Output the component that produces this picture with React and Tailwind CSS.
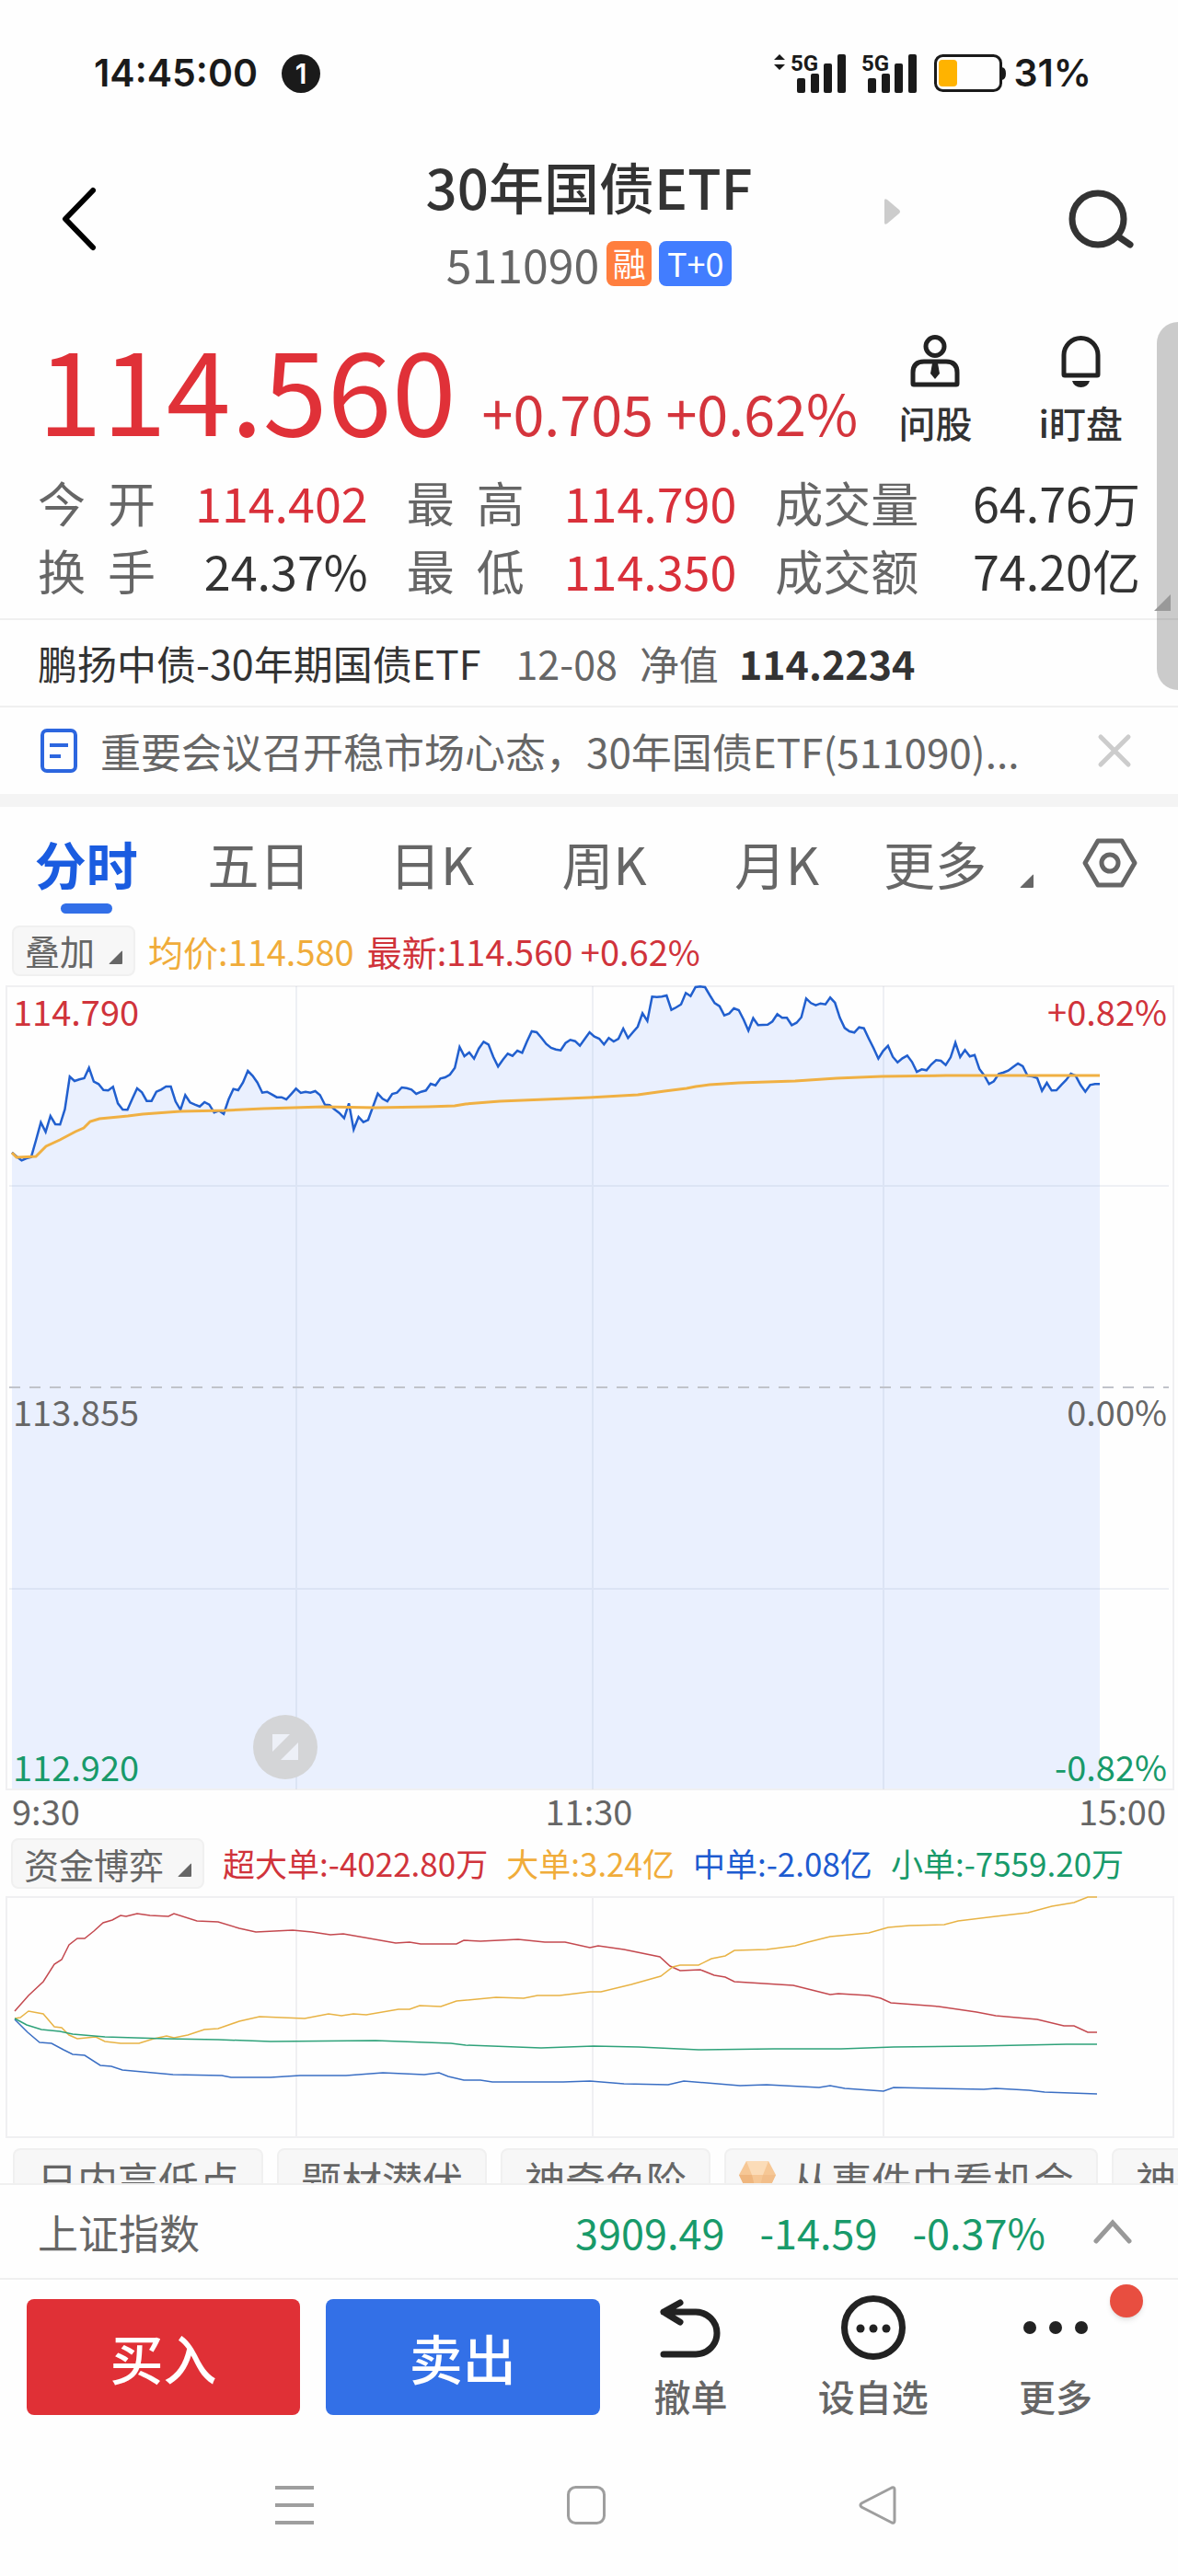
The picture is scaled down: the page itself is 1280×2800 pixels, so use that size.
import React from 'react';

// one sample per minute, in thirds of a chart pixel below the top edge
const PRICE = [
  545, 559, 571, 564, 560, 504, 447, 478, 426, 453, 454, 404, 298, 312, 307, 303, 269, 314, 322, 341,
  343, 331, 385, 405, 406, 370, 336, 349, 377, 377, 347, 340, 330, 330, 379, 406, 358, 382, 389, 395,
  381, 389, 415, 409, 419, 372, 338, 342, 317, 279, 295, 317, 350, 347, 356, 365, 365, 372, 355, 337,
  351, 347, 350, 345, 358, 389, 391, 404, 416, 433, 385, 470, 429, 446, 439, 395, 353, 370, 378, 354,
  350, 333, 335, 340, 354, 347, 343, 321, 326, 304, 300, 291, 269, 201, 231, 219, 239, 206, 184, 193,
  233, 265, 242, 223, 230, 213, 220, 183, 150, 153, 171, 191, 204, 209, 212, 188, 178, 182, 197, 175,
  153, 167, 174, 193, 172, 183, 174, 141, 172, 153, 135, 91, 116, 37, 38, 37, 33, 80, 72, 62,
  25, 35, 6, 4, 6, 33, 58, 68, 98, 92, 75, 81, 112, 148, 107, 130, 129, 128, 118, 94,
  106, 106, 130, 122, 104, 43, 58, 65, 59, 62, 40, 57, 106, 139, 150, 154, 137, 140, 173, 205,
  239, 214, 197, 233, 251, 238, 229, 250, 282, 274, 277, 258, 244, 246, 260, 235, 187, 234, 211, 232,
  227, 273, 294, 322, 313, 289, 284, 278, 266, 255, 264, 295, 297, 302, 344, 318, 343, 342, 325, 309,
  288, 295, 325, 347, 325, 322, 322,
];

const AVERAGE =
  '7,182 12,187 33,186 44,175 59,168 76,159 85,155 92,148 102,145 123,143 133,142 149,140 190,137 239,136 280,134 345,132 402,133 459,132 488,131 500,129 537,126 586,124 634,122 687,119 716,115 740,112 750,110 765,108 797,106 858,104 903,101 952,99 1022,98 1189,98';

const FUNDS = [
  {
    name: '超大单',
    value: '-4022.80万',
    text: 'text-[#d0333b]',
    stroke: '#c4494f',
    points:
      '10,125 25,108 41,93 53,74 61,69 69,53 78,46 86,46 96,38 106,29 116,26 125,21 131,22 143,19 157,21 177,22 183,19 208,27 231,28 254,35 272,39 312,37 333,39 353,42 367,41 390,45 424,51 439,50 451,52 490,52 498,48 516,49 557,47 586,50 608,50 635,56 644,54 672,58 711,66 722,76 733,81 755,80 770,86 782,88 792,93 856,97 876,102 896,107 905,106 938,108 951,111 962,116 1014,120 1055,126 1076,130 1121,134 1150,141 1161,141 1176,148 1186,148',
  },
  {
    name: '大单',
    value: '3.24亿',
    text: 'text-[#f0ac3a]',
    stroke: '#e8b345',
    points:
      '10,133 16,132 25,125 41,128 53,142 61,143 69,151 78,155 98,153 108,158 125,160 145,160 161,155 175,152 183,154 198,151 216,145 231,144 254,136 276,131 325,133 351,128 365,130 378,128 392,129 427,123 439,123 450,119 473,120 490,114 533,110 563,111 578,108 602,108 635,104 647,104 680,96 712,87 725,77 733,75 753,75 767,68 782,65 792,59 827,58 858,54 872,50 896,44 938,40 959,34 982,32 1020,31 1035,27 1076,22 1111,18 1137,11 1161,7 1176,1 1186,1',
  },
  {
    name: '中单',
    value: '-2.08亿',
    text: 'text-[#1d5bd0]',
    stroke: '#3b6fc4',
    points:
      '10,134 24,148 37,159 50,160 63,167 73,172 86,173 103,184 115,185 127,189 149,191 182,194 235,195 245,197 288,197 320,195 370,195 410,192 455,194 471,192 481,196 498,200 516,200 529,202 606,202 635,201 672,204 720,205 737,201 798,206 827,205 884,208 896,206 912,209 954,212 965,208 1063,210 1076,209 1112,211 1129,213 1186,215',
  },
  {
    name: '小单',
    value: '-7559.20万',
    text: 'text-[#189a6a]',
    stroke: '#2fa27a',
    points:
      '10,133 23,140 39,145 59,147 73,150 108,153 174,155 231,156 288,158 402,157 484,160 500,162 582,165 639,163 688,164 753,167 835,166 908,166 965,164 1055,163 1153,161 1186,161',
  },
];

const STATS = [
  ['今开', '114.402', 'text-[#d9303a]'],
  ['最高', '114.790', 'text-[#d9303a]'],
  ['成交量', '64.76万', 'text-[#333]'],
  ['换手', '24.37%', 'text-[#333]'],
  ['最低', '114.350', 'text-[#d9303a]'],
  ['成交额', '74.20亿', 'text-[#333]'],
];

const TABS = ['分时', '五日', '日K', '周K', '月K'];

function Signal() {
  return (
    <svg className="w-[60px] h-[44px] overflow-visible" viewBox="0 0 60 44" fill="#1a1a1a">
      <text x="0" y="19" fontSize="24" fontWeight="700" fontFamily="Roboto, sans-serif">5G</text>
      <rect x="7" y="27" width="9" height="16" rx="2" />
      <rect x="22" y="22" width="9" height="21" rx="2" />
      <rect x="36" y="11" width="9" height="32" rx="2" />
      <rect x="51" y="1" width="9" height="42" rx="2" />
    </svg>
  );
}

function Corner() {
  return (
    <svg className="w-[15px] h-[15px]" viewBox="0 0 15 15" fill="#666">
      <path d="M15 1v13q0 1-1 1H1q-1 0 0-1L14 1q1-1 1 0z" />
    </svg>
  );
}

function StatusBar() {
  return (
    <div className="h-[160px] pl-[102px] pr-[94px] flex items-center justify-between text-[#1a1a1a] font-['Inter',sans-serif] font-semibold text-[41px]">
      <div className="flex items-center gap-[26px]">
        <span>14:45:00</span>
        <span className="w-[42px] h-[42px] rounded-full bg-[#1a1a1a] text-white text-[30px] leading-none flex items-center justify-center">1</span>
      </div>
      <div className="flex items-center">
        <svg className="w-[12px] h-[44px] mr-[6px]" viewBox="0 0 12 44" fill="#1a1a1a">
          <path d="M6 1l6 6H0zM6 18l6-6H0z" />
        </svg>
        <Signal />
        <span className="w-[17px]" />
        <Signal />
        <svg className="w-[79px] h-[42px] ml-[19px] mr-[7px]" viewBox="0 0 79 42" fill="none">
          <rect x="1.5" y="1.5" width="71" height="38" rx="8" stroke="#1a1a1a" strokeWidth="3" />
          <rect x="5" y="6" width="20" height="29" rx="4" fill="#ffb300" />
          <path d="M73 14q5 0 5 7t-5 7z" fill="#1a1a1a" />
        </svg>
        <span>31%</span>
      </div>
    </div>
  );
}

function Header() {
  return (
    <header className="relative px-[48px] flex items-start justify-between">
      <button aria-label="返回" className="h-[156px] w-[76px] flex items-center justify-center">
        <svg className="w-[40px] h-[70px]" viewBox="0 0 40 70" fill="none" stroke="#000" strokeWidth="6" strokeLinecap="round" strokeLinejoin="round">
          <path d="M35 4L5 35l30 31" />
        </svg>
      </button>
      <div className="text-center leading-[84px]">
        <h1 className="text-[60px] text-[#333] font-medium">30年国债ETF</h1>
        <div className="flex items-center justify-center gap-[8px]">
          <span className="text-[50px] text-[#666]">511090</span>
          <span className="h-[49px] w-[49px] rounded-[8px] bg-[#ff7e3e] text-white text-[36px] leading-[47px]">融</span>
          <span className="h-[49px] w-[79px] rounded-[8px] bg-[#427dff] text-white text-[36px] leading-[47px]">T+0</span>
        </div>
      </div>
      <button aria-label="搜索" className="h-[156px] w-[76px] flex items-center justify-end">
        <svg className="w-[72px] h-[66px]" viewBox="0 0 72 66" fill="none" stroke="#333" strokeWidth="7">
          <circle cx="33" cy="33" r="28" />
          <path d="M55 52l13 9" strokeLinecap="round" />
        </svg>
      </button>
      <button aria-label="下一只" className="absolute right-[302px] top-[56px]">
        <svg className="w-[17px] h-[28px]" viewBox="0 0 17 28" fill="#ccc">
          <path d="M0 2q0-3 3-1l13 11q2 2 0 4L3 27q-3 2-3-1z" />
        </svg>
      </button>
    </header>
  );
}

function Quote() {
  return (
    <section className="px-[41px] pb-[15px] border-b-2 border-[#f0f0f0]">
      <div className="h-[157px] flex items-start justify-between">
        <div className="pt-[28px] flex items-baseline gap-[28px] text-[#e03138]">
          <span className="text-[126px] leading-[126px]">114.560</span>
          <span className="text-[61px] leading-[60px] text-[#d4343c]">+0.705 +0.62%</span>
        </div>
        <div className="pt-[36px] pr-[19px] flex gap-[72px] text-[40px] leading-[48px] text-[#333] font-medium">
          <button className="flex flex-col items-center gap-[14px]">
            <svg className="w-[54px] h-[57px]" viewBox="0 0 54 57" fill="none" stroke="#222" strokeWidth="5">
              <circle cx="27" cy="12.500" r="10" />
              <path d="M3 53V41q0-12 12-12h24q12 0 12 12v12q0 1-1 1H4q-1 0-1-1z" />
              <path d="M24 31h6l2 11-5 6-5-6z" fill="#222" stroke="none" />
            </svg>
            问股
          </button>
          <button className="flex flex-col items-center gap-[14px]">
            <svg className="w-[43px] h-[57px]" viewBox="0 0 43 57" fill="none" stroke="#222" strokeWidth="5">
              <path d="M3 43V22a18.500 18.500 0 0 1 37 0v21q0 1-1 1H4q-1 0-1-1z" />
              <path d="M12 50h19q-2 7-9.500 7T12 50z" fill="#222" stroke="none" />
            </svg>
            i盯盘
          </button>
        </div>
      </div>
      <dl className="mt-[24px] grid grid-cols-[358fr_358fr_396fr] gap-x-[42px] text-[52px] leading-[74px]">
        {STATS.map(([label, value, color]) => (
          <div key={label} className="flex justify-between">
            <dt className="min-w-[128px] flex justify-between text-[#666]">
              {label.split('').map((c) => <span key={c}>{c}</span>)}
            </dt>
            <dd className={color}>{value}</dd>
          </div>
        ))}
      </dl>
    </section>
  );
}

function FundInfo() {
  return (
    <>
      <div className="h-[95px] px-[41px] flex items-center border-b-2 border-[#f0f0f0] text-[43px] text-[#666]">
        <span className="text-[#333]">鹏扬中债-30年期国债ETF</span>
        <span className="ml-[38px]">12-08</span>
        <span className="ml-[24px]">净值</span>
        <b className="ml-[22px] text-[#333]">114.2234</b>
      </div>
      <div className="h-[94px] pl-[44px] pr-[50px] flex items-center text-[44px] text-[#666]">
        <svg className="w-[40px] h-[48px] shrink-0" viewBox="0 0 40 48" fill="none" stroke="#2c66df" strokeWidth="4">
          <rect x="2" y="2" width="36" height="44" rx="5" />
          <path d="M10 18h20M10 30h12" />
        </svg>
        <a href="#news" className="ml-[25px] flex-1 truncate">重要会议召开稳市场心态，30年国债ETF(511090)...</a>
        <button aria-label="关闭">
          <svg className="w-[38px] h-[38px]" viewBox="0 0 38 38" stroke="#ccc" strokeWidth="5" strokeLinecap="round">
            <path d="M4 4l30 30M34 4L4 34" />
          </svg>
        </button>
      </div>
      <div className="h-[14px] bg-[#f4f4f4]" />
    </>
  );
}

function Tabs() {
  return (
    <nav className="h-[122px] pr-[44px] flex items-center text-[56px] leading-[70px] text-[#666]">
      {TABS.map((tab, i) => (
        <button key={tab} className={i === 0 ? 'relative flex-1 h-full font-bold text-[#1a5ce0]' : 'flex-1 h-full'}>
          {tab}
          {i === 0 && <span className="absolute bottom-[6px] left-1/2 -translate-x-1/2 w-[56px] h-[11px] rounded-full bg-[#326fe8]" />}
        </button>
      ))}
      <button className="ml-[22px] h-full flex items-center gap-[36px]">
        更多
        <span className="pt-[38px]"><Corner /></span>
      </button>
      <button aria-label="设置" className="ml-[53px]">
        <svg className="w-[60px] h-[54px]" viewBox="0 0 60 54" fill="none" stroke="#666" strokeWidth="5" strokeLinejoin="round">
          <path d="M17 3h26l14 24-14 24H17L3 27z" />
          <circle cx="30" cy="27" r="9" />
        </svg>
      </button>
    </nav>
  );
}

function Picker({ children }) {
  return (
    <button className="h-[55px] px-[12px] flex items-center gap-[15px] rounded-[8px] border-2 border-[#f0f0f0] bg-[#f7f7f7] text-[38px] leading-[48px] text-[#666]">
      {children}
      <span className="pt-[14px]"><Corner /></span>
    </button>
  );
}

function PriceChart() {
  const line = PRICE.map((v, i) => `${(7 + i * 5.23).toFixed(1)},${(v / 3).toFixed(1)}`).join(' ');
  return (
    <section className="text-[38px]">
      <div className="h-[72px] px-[13px] pb-[4px] flex items-center gap-[14px]">
        <Picker>叠加</Picker>
        <span className="text-[#f0ac3a]">均价:114.580</span>
        <span className="text-[#d0333b]">最新:114.560 +0.62%</span>
      </div>
      <div className="relative ml-[6px] mr-[4px]">
        <svg className="block w-full h-[875px]" viewBox="0 0 1270 875" preserveAspectRatio="none" fill="none">
          <polygon points={`7,874 ${line} 1189,874`} fill="#eaf0fe" />
          <path d="M1 1h1268v873H1z" stroke="#f0f0f2" strokeWidth="2" />
          <path d="M316 1v873M638 1v873M954 1v873M4 218h1260M4 656h1260" stroke="#8090b0" strokeOpacity="0.13" strokeWidth="2" />
          <path d="M4 437h1260" stroke="#c0c3ca" strokeWidth="2" strokeDasharray="12 10" />
          <polyline points={line} stroke="#215fce" strokeWidth="2.5" />
          <polyline points={AVERAGE} stroke="#f0b043" strokeWidth="3" />
        </svg>
        <div className="absolute inset-0 px-[8px] leading-[50px] text-[#666]">
          <div className="h-[438px] pt-[3px] flex justify-between text-[#d0333b]">
            <span>114.790</span>
            <span>+0.82%</span>
          </div>
          <div className="h-[386px] flex justify-between">
            <span>113.855</span>
            <span>0.00%</span>
          </div>
          <div className="flex justify-between text-[#189a6a]">
            <span>112.920</span>
            <span>-0.82%</span>
          </div>
        </div>
        <button aria-label="全屏" className="absolute left-[269px] bottom-[12px] w-[70px] h-[70px] rounded-full bg-[#d4d5d7] flex items-center justify-center">
          <svg className="w-[30px] h-[30px]" viewBox="0 0 30 30" fill="#edf0f7">
            <path d="M1 1h19L1 20zM29 10v19H10z" />
          </svg>
        </button>
      </div>
      <div className="px-[13px] grid grid-cols-3 leading-[44px] text-[#666]">
        <span>9:30</span>
        <span className="text-center">11:30</span>
        <span className="text-right">15:00</span>
      </div>
    </section>
  );
}

function FundChart() {
  return (
    <section>
      <div className="h-[71px] px-[12px] flex items-center gap-[20px] text-[35px] whitespace-nowrap">
        <Picker>资金博弈</Picker>
        {FUNDS.map((f) => (
          <span key={f.name} className={f.text}>{f.name}:{f.value}</span>
        ))}
      </div>
      <div className="ml-[6px] mr-[4px]">
        <svg className="block w-full h-[263px]" viewBox="0 0 1270 263" preserveAspectRatio="none" fill="none">
          <path d="M1 1h1268v261H1z" stroke="#f0f0f2" strokeWidth="2" />
          <path d="M316 1v261M638 1v261M954 1v261" stroke="#f0f0f2" strokeWidth="2" />
          {FUNDS.map((f) => (
            <polyline key={f.name} points={f.points} stroke={f.stroke} strokeWidth="1.5" />
          ))}
        </svg>
      </div>
    </section>
  );
}

function Gem() {
  return (
    <svg className="w-[40px] h-[44px]" viewBox="0 0 40 44">
      <path d="M8 2h24l8 15-10 21q-10 6-20 0L0 17z" fill="#f6c795" />
      <path d="M8 2h24l-6 15H14z" fill="#fbdcb8" />
      <path d="M0 17h14l6 24q-6 0-10-3z" fill="#efb67e" />
      <path d="M26 17h14L30 38q-4 3-10 3z" fill="#f2be8a" />
    </svg>
  );
}

function Chips() {
  const chip = 'h-[68px] px-[24px] shrink-0 flex items-center rounded-[8px] border-2 border-[#f0f0f0] bg-[#f7f7f7]';
  return (
    <div className="h-[49px] pt-[11px] pl-[14px] flex gap-[15px] overflow-hidden text-[44px] leading-[60px] text-[#666] whitespace-nowrap">
      <button className={chip}>日内高低点</button>
      <button className={chip}>题材潜伏</button>
      <button className={chip}>神奇色阶</button>
      <button className="h-[68px] pl-[14px] pr-[24px] shrink-0 flex items-center gap-[16px] rounded-[8px] border-2 border-[#f0f0f0] bg-[#f7f7f7]">
        <Gem />
        从事件中看机会
      </button>
      <button className={chip}>神奇九转</button>
    </div>
  );
}

function IndexRow() {
  return (
    <div className="h-[105px] px-[41px] flex items-center border-y-2 border-[#f0f0f0] text-[44px] text-[#666]">
      <span className="flex-1">上证指数</span>
      <div className="flex gap-[38px] text-[45px] text-[#189a6a]">
        <span>3909.49</span>
        <span>-14.59</span>
        <span>-0.37%</span>
      </div>
      <button aria-label="展开" className="ml-[52px] mr-[9px]">
        <svg className="w-[42px] h-[28px]" viewBox="0 0 42 28" fill="none" stroke="#999" strokeWidth="5" strokeLinecap="round">
          <path d="M3 24L21 4l18 20" />
        </svg>
      </button>
    </div>
  );
}

function ActionBar() {
  const action = 'relative flex-[198] -mt-1 flex flex-col items-center gap-[15px]';
  return (
    <div className="pt-[21px] pl-[29px] pr-[34px] flex items-start text-[40px] leading-[48px] text-[#666] font-medium">
      <button className="flex-[297] h-[126px] rounded-[8px] bg-[#e03036] text-white text-[58px]">买入</button>
      <button className="flex-[297] ml-[28px] h-[126px] rounded-[8px] bg-[#3370e7] text-white text-[58px]">卖出</button>
      <button className={action}>
        <svg className="w-[70px] h-[70px]" viewBox="0 0 70 70" fill="none" stroke="#222" strokeWidth="7" strokeLinecap="round" strokeLinejoin="round">
          <path d="M23 8L5 18l18 11M5 18h35a23 23 0 0 1 0 46H5" />
        </svg>
        撤单
      </button>
      <button className={action}>
        <svg className="w-[70px] h-[70px]" viewBox="0 0 70 70" fill="#222">
          <circle cx="35" cy="35" r="31.500" fill="none" stroke="#222" strokeWidth="7" />
          <circle cx="21" cy="36" r="4.500" />
          <circle cx="35" cy="36" r="4.500" />
          <circle cx="49" cy="36" r="4.500" />
        </svg>
        设自选
      </button>
      <button className={action}>
        <svg className="w-[70px] h-[70px]" viewBox="0 0 70 70" fill="#222">
          <circle cx="7" cy="35" r="7" />
          <circle cx="35" cy="35" r="7" />
          <circle cx="63" cy="35" r="7" />
        </svg>
        更多
        <span className="absolute right-[4px] -top-[12px] w-[36px] h-[36px] rounded-full bg-[#e84e40] shadow-md" />
      </button>
    </div>
  );
}

function SystemNav() {
  return (
    <nav className="pt-[74px] pb-[56px] pl-[161px] pr-[167px] grid grid-cols-3 justify-items-center">
      <button aria-label="最近任务">
        <svg className="block w-[42px] h-[42px]" viewBox="0 0 42 42" stroke="#9e9e9e" strokeWidth="4">
          <path d="M0 2h42M0 21h42M0 40h42" />
        </svg>
      </button>
      <button aria-label="主页">
        <svg className="block w-[42px] h-[42px]" viewBox="0 0 42 42" fill="none" stroke="#9e9e9e" strokeWidth="3">
          <rect x="1.500" y="1.500" width="39" height="39" rx="8" />
        </svg>
      </button>
      <button aria-label="后退">
        <svg className="block w-[42px] h-[42px]" viewBox="0 0 42 42" fill="none" stroke="#9e9e9e" strokeWidth="3" strokeLinejoin="round">
          <path d="M36 2L3 19q-2 2 0 4l33 17q3 1 3-2V4q0-3-3-2z" />
        </svg>
      </button>
    </nav>
  );
}

export default function App() {
  return (
    <div className="relative overflow-hidden bg-[#fefefe] font-['Noto_Sans_CJK_SC',sans-serif]">
      <StatusBar />
      <Header />
      <Quote />
      <FundInfo />
      <Tabs />
      <PriceChart />
      <FundChart />
      <Chips />
      <IndexRow />
      <ActionBar />
      <SystemNav />
      {/* edge handle */}
      <div className="absolute right-0 top-[350px] w-[23px] h-[400px] rounded-l-[23px] bg-black/20" />
      <svg className="absolute right-[8px] top-[646px] w-[18px] h-[18px]" viewBox="0 0 18 18" fill="#999">
        <path d="M18 0v18H0z" />
      </svg>
    </div>
  );
}
